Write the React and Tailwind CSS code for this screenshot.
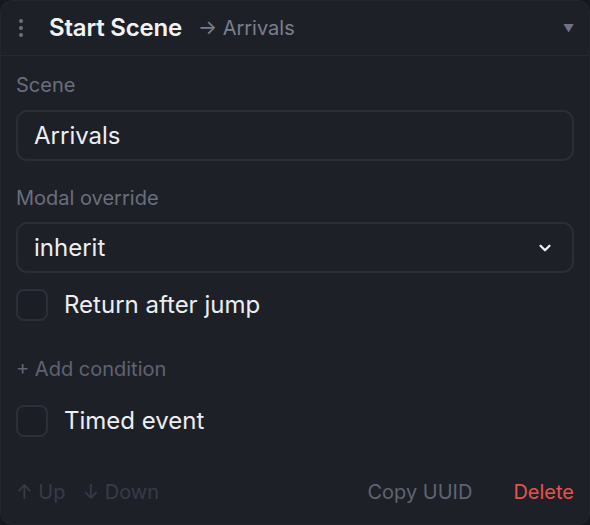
import { ChevronDown } from 'lucide-react';

function Checkbox({ label }) {
  return (
    <label className="flex items-center gap-4 h-8">
      <span className="w-8 h-8 rounded-lg border-2 border-[#2c2f3b] bg-[#1c1e25] shrink-0" />
      <span className="text-[24px] leading-8 text-[#eceef2]">{label}</span>
    </label>
  );
}

export default function App() {
  return (
    <div className="w-[590px] h-[525px] bg-[#16181d] font-['Inter',sans-serif]">
      <div className="w-full h-full bg-[#1e2028] rounded-xl border border-[#23262f] overflow-hidden flex flex-col">
        <div className="h-[55px] shrink-0 flex items-center border-b border-[#262933] pl-[18px] pr-[15px]">
          <div className="flex flex-col gap-[3px] mr-[26px]">
            <span className="w-[4px] h-[4px] rounded-sm bg-[#6b6f7e]" />
            <span className="w-[4px] h-[4px] rounded-sm bg-[#6b6f7e]" />
            <span className="w-[4px] h-[4px] rounded-sm bg-[#6b6f7e]" />
          </div>
          <span className="text-[24px] leading-8 font-semibold text-[#f2f3f5] tracking-[-0.2px]">Start Scene</span>
          <span className="ml-[16px] text-[20px] text-[#7a7e8d]">→ Arrivals</span>
          <span className="ml-auto text-[11px] text-[#6f7384]">▼</span>
        </div>

        <div className="flex-1 flex flex-col px-[15px] pt-[17px]">
          <div className="text-[20px] leading-6 text-[#6a6e7d]">Scene</div>
          <div className="mt-[13px] h-[51px] rounded-[11px] border-2 border-[#2b2e3a] flex items-center px-[16px] text-[24px] text-[#eceef2]">
            Arrivals
          </div>

          <div className="mt-[25px] text-[20px] leading-6 text-[#6a6e7d]">Modal override</div>
          <div className="mt-[12px] h-[51px] rounded-[11px] border-2 border-[#2b2e3a] flex items-center pl-[16px] pr-[18px] text-[24px] text-[#eceef2]">
            <span>inherit</span>
            <ChevronDown size={18} strokeWidth={3} className="ml-auto text-[#eceef2]" />
          </div>

          <div className="mt-[16px]">
            <Checkbox label="Return after jump" />
          </div>

          <div className="mt-[36px] text-[20px] leading-6 text-[#5f6372]">+ Add condition</div>

          <div className="mt-[24px]">
            <Checkbox label="Timed event" />
          </div>

          <div className="mt-[43px] flex items-center text-[20px] leading-6">
            <span className="text-[#383b48]">↑ Up</span>
            <span className="ml-[17px] text-[#383b48]">↓ Down</span>
            <span className="ml-auto text-[#5f6475]">Copy UUID</span>
            <span className="ml-[41px] text-[#e5534b]">Delete</span>
          </div>
        </div>
      </div>
    </div>
  );
}
